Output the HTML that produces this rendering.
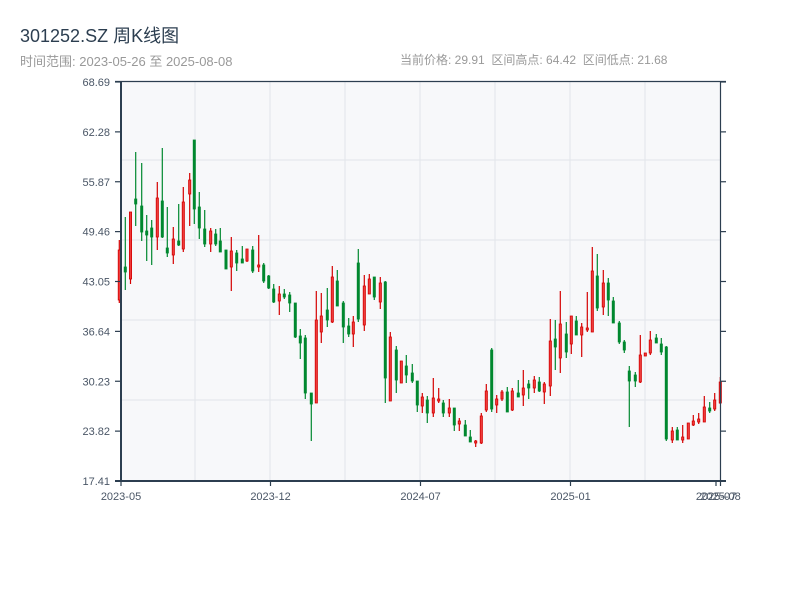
<!DOCTYPE html>
<html><head><meta charset="utf-8"><style>
body{margin:0;width:800px;height:600px;background:#fff;overflow:hidden;font-family:"Liberation Sans","Noto Sans CJK SC",sans-serif}
.t{position:absolute;left:20px;top:22px;font-size:18px;color:#2c3e50}
.s{position:absolute;left:20px;top:51px;font-size:13px;color:#999}
.r{position:absolute;left:400px;top:51px;font-size:12px;color:#999;white-space:pre}
svg{position:absolute;left:0;top:0}
</style></head><body>
<div class="t">301252.SZ 周K线图</div>
<div class="s">时间范围: 2023-05-26 至 2025-08-08</div>
<div class="r">当前价格: 29.91  区间高点: 64.42  区间低点: 21.68</div>
<svg id="c" width="800" height="600" xmlns="http://www.w3.org/2000/svg"></svg>
<script>
var D=[
[119.3,240,303,250,300,1],[125.3,217,290,267,272,0],[130.5,212,284,212,279,1],[135.7,152,226,199,204,0],[141.7,163,241,206,232,0],[146.7,215,261,231,235,0],[151.7,220,265,228,237,0],[157.3,182,250,198,237,1],[162.3,148,238,201,237,0],[167.3,207,257,248,253,0],[173.3,227,264,239,255,1],[178.7,204,246,241,245,0],[183.3,187,252,202,249,1],[189.7,173,226,180,194,1],[194.3,140,224,140,209,0],[199.3,192,239,207,228,0],[204.7,210,247,229,244,0],[210.7,228,252,231,244,1],[215.7,229,246,234,244,0],[220.3,228,252,241,252,0],
[226,250,269,250,269,0],[231.3,237,291,251,267,1],[236.7,250,271,253,263,0],[242.3,246,263,259,263,0],[247,249,262,249,261,1],[252.7,246,273,250,271,0],[258.7,235,272,265,267,1],[263.7,263,283,265,281,0],[268.7,275,289,276,288,0],[273.7,284,303,289,302,0],[279.3,286,315,294,301,1],[284.3,289,299,294,297,0],[289.7,292,312,295,303,0],[295.3,303,338,303,337,0],[300.3,329,359,336,343,0],[305.3,335,399,338,393,0],
[311.3,393,441,393,404,0],[316.3,291,403,320,403,1],[321.3,293,343,316,332,1],[327.3,288,327,310,320,0],[332.3,266,323,277,322,1],[337.3,270,306,281,306,0],[343.3,301,343,303,327,0],[348.7,318,337,326,334,0],[353.3,316,347,322,334,1],[358.3,249,322,263,319,0],[364.3,275,331,286,325,1],[369.3,274,294,279,294,1],[374.3,277,300,277,297,0],[380.3,277,309,283,302,1],[385.3,281,403,282,378,0],[390.3,332,401,337,401,1],[396.3,346,393,350,380,0],[401.3,361,383,361,383,1],[406.3,355,383,366,375,0],[412.3,364,383,373,381,0],[417.3,381,412,381,405,0],[422.3,393,413,397,406,1],[427.3,396,423,400,413,0],[433.3,378,417,398,413,1],[438.7,388,403,399,401,1],[443.3,400,417,403,413,0],[449.3,399,417,408,413,1],[454.3,408,431,408,425,0],[459.3,418,431,421,424,1],[465.3,420,436,425,436,0],[470.3,430,442,437,442,0],[475.7,440,447,441,443,1],[481.3,413,444,416,443,1],[486.3,384,412,391,410,1],[491.7,348,412,350,409,0],[496.7,395,413,399,405,1],[502,390,401,392,399,1],[507.3,387,412,392,412,0],
[512.3,388,411,391,410,1],[518.3,380,397,393,397,0],[523.3,370,406,388,395,1],[528.7,380,399,384,388,0],[534.3,376,393,380,388,1],[539.3,377,392,382,391,0],[544.3,382,404,384,392,1],[550.3,319,396,341,386,1],[555.3,320,370,339,347,0],[560.3,291,373,324,358,1],[566.3,322,358,334,352,0],[571.3,316,354,316,344,1],[576.3,316,335,321,335,0],[581.7,323,357,327,335,1],[587.3,292,332,328,330,1],[592.3,247,332,271,332,1],[597.3,254,311,276,308,0],[603.3,270,315,283,307,1],[608.3,278,316,283,300,0],[613.3,297,323,301,323,0],[619.3,321,344,323,342,0],[624.3,340,353,342,350,0],[629.3,366,427,371,381,0],[635.3,372,387,375,381,0],[640.3,335,383,355,382,1],[645.3,353,356,353,356,1],[650.3,331,355,340,353,1],[656.3,334,343,338,343,0],[661.3,338,355,344,352,0],[666.3,346,441,347,439,0],[672.3,427,443,431,440,1],[677.3,427,440,430,440,0],[682.7,425,443,437,440,1],[688.3,423,439,423,439,1],[693.3,415,426,421,425,1],[698.7,413,424,419,422,1],[704.3,396,422,407,422,1],[709.7,402,413,408,411,0],[714.7,393,411,400,409,1],[720.3,377,404,382,403,1]];
var s='<rect x="121" y="82" width="599" height="399" fill="#f7f8fa"/>';
[160,240,320,400].forEach(function(y){s+='<line x1="121" x2="720" y1="'+y+'" y2="'+y+'" stroke="#e2e5ea" stroke-width="1"/>';});
for(var x=195;x<720;x+=75)s+='<line x1="'+x+'" x2="'+x+'" y1="82" y2="481" stroke="#e2e5ea" stroke-width="1"/>';
D.forEach(function(d){var col=d[5]?'#d40000':'#00882f';var fill=d[5]?'#ee3b3b':'#00882f';
s+='<line x1="'+d[0]+'" x2="'+d[0]+'" y1="'+d[1]+'" y2="'+d[2]+'" stroke="'+col+'" stroke-width="1.2"/>';
var h=Math.max(1.5,d[4]-d[3]);s+='<rect x="'+(d[0]-1.1)+'" y="'+d[3]+'" width="2.2" height="'+h+'" fill="'+fill+'" stroke="'+col+'" stroke-width="0.8"/>';});
var ax='#2c3e50';
s+='<line x1="115" x2="726" y1="81.5" y2="81.5" stroke="'+ax+'" stroke-width="1.2"/>';
s+='<line x1="115" x2="726" y1="481" y2="481" stroke="'+ax+'" stroke-width="2"/>';
s+='<line x1="121" x2="121" y1="81" y2="482" stroke="'+ax+'" stroke-width="2"/>';
s+='<line x1="720.5" x2="720.5" y1="81" y2="482" stroke="'+ax+'" stroke-width="1.2"/>';
var L=['68.69','62.28','55.87','49.46','43.05','36.64','30.23','23.82','17.41'];
L.forEach(function(t,i){var y=82+i*49.875;s+='<line x1="115" x2="120" y1="'+y+'" y2="'+y+'" stroke="'+ax+'" stroke-width="1.2"/><line x1="721" x2="726" y1="'+y+'" y2="'+y+'" stroke="'+ax+'" stroke-width="1.2"/><text x="110" y="'+(y+4)+'" text-anchor="end" font-size="11" fill="#4a5666" font-family="Liberation Sans,sans-serif">'+t+'</text>';});
[[121,'2023-05'],[270.5,'2023-12'],[420.5,'2024-07'],[570.5,'2025-01'],[716,'2025-07'],[720.5,'2025-08']].forEach(function(a){s+='<line x1="'+a[0]+'" x2="'+a[0]+'" y1="481" y2="486" stroke="'+ax+'" stroke-width="1.2"/><text x="'+a[0]+'" y="500" text-anchor="middle" font-size="11" fill="#4a5666" font-family="Liberation Sans,sans-serif">'+a[1]+'</text>';});
document.getElementById('c').innerHTML=s;
</script>
</body></html>
